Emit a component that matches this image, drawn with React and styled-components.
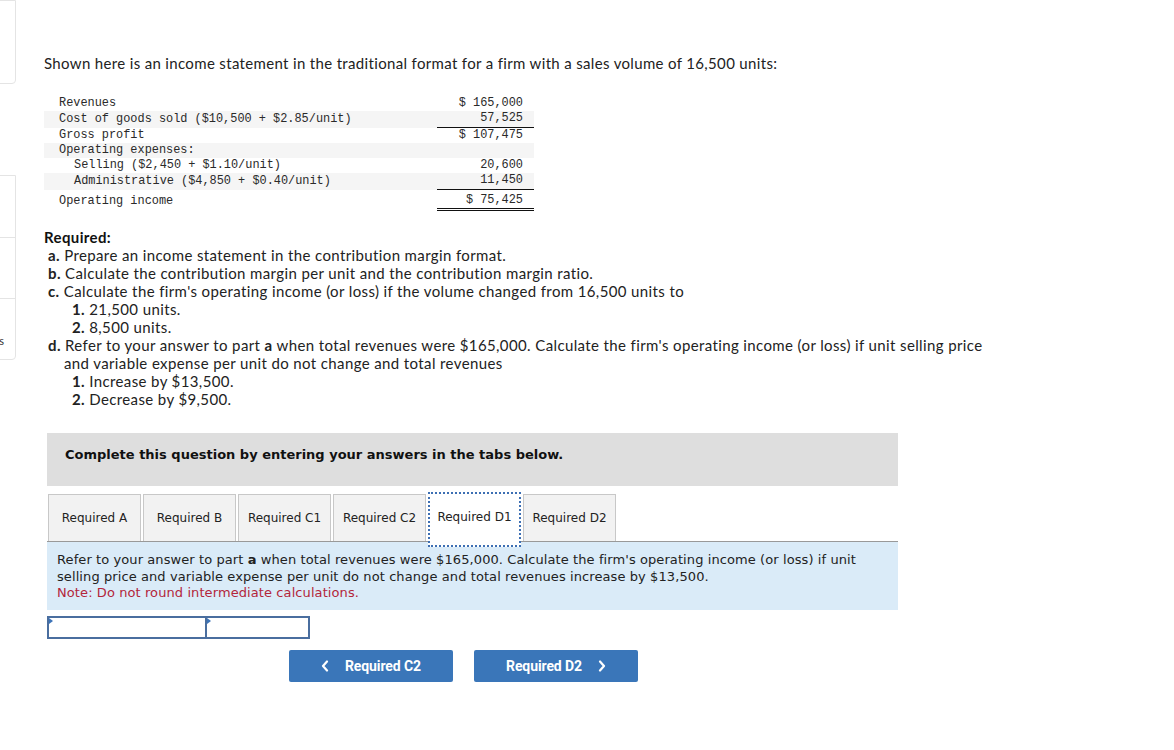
import React from 'react'
import styled, { createGlobalStyle } from 'styled-components'

const GlobalStyle = createGlobalStyle`
  html, body {
    margin: 0;
    padding: 0;
    background: #fff;
  }
  body {
    font-family: Lato, "Open Sans", sans-serif;
    color: #222;
  }
`

const Page = styled.div`
  display: flex;
  flex-direction: row;
  width: 1174px;
  min-height: 750px;
`

const Sidebar = styled.div`
  flex: 0 0 16px;
  overflow: hidden;
  display: flex;
  flex-direction: column;
`

const SideCard = styled.div`
  width: 216px;
  margin-left: -200px;
  margin-top: ${props => props.top || 0}px;
  border: 1px solid #e4e4e4;
  border-radius: 0 0 4px 0;
  box-sizing: border-box;
  display: flex;
  flex-direction: column;
  background: #fff;
`

const SideSection = styled.div`
  height: ${props => props.h}px;
  border-top: ${props => (props.first ? 'none' : '1px solid #e4e4e4')};
  display: flex;
  align-items: flex-end;
  justify-content: flex-end;
  padding: 0 11px 12px 0;
  box-sizing: border-box;
  font-size: 11px;
  color: #333;
`

const Main = styled.div`
  flex: 1 1 auto;
  padding: 53px 0 0 28px;
`

const Intro = styled.p`
  margin: 0;
  font-size: 15px;
  line-height: 20px;
  letter-spacing: 0.34px;
  color: #222;
`

const Statement = styled.table`
  margin-top: 23px;
  border-spacing: 0;
  width: 490px;
  font-family: "Liberation Mono", "DejaVu Sans Mono", monospace;
  font-size: 11.9px;
  color: #2a2a2a;

  td {
    padding: 0;
    line-height: 15.3px;
    white-space: pre;
  }
`

const Row = styled.tr`
  background: ${props => (props.striped ? '#f5f5f5' : 'transparent')};

  td {
    padding-top: ${props => props.padTop || 0}px;
  }
`

const Label = styled.td`
  padding-left: ${props => (props.indent ? 30 : 15)}px !important;
`

const Amount = styled.td`
  width: 86px;
  padding-right: 11px !important;
  text-align: right;
  border-bottom: ${props =>
    props.rule === 'double' ? '3px double #111' : props.rule ? '1px solid #111' : 'none'};
`

const Required = styled.div`
  margin-top: 17px;
  font-size: 15px;
  line-height: 18px;
  letter-spacing: 0.38px;
  color: #222;
`

const ReqTitle = styled.div`
  font-weight: 700;
  color: #111;
`

const ReqItem = styled.div`
  padding-left: 20px;
  text-indent: -16px;
  b {
    font-weight: 700;
  }
`

const SubItem = styled.div`
  padding-left: 24px;
`

const Question = styled.div`
  margin: 25px 0 0 3px;
  width: 851px;
  font-family: "DejaVu Sans", Verdana, sans-serif;
`

const Banner = styled.div`
  background: #dedede;
  height: 53px;
  box-sizing: border-box;
  padding: 14px 18px 0;
  font-size: 13px;
  line-height: 16px;
  font-weight: 700;
  color: #111;
`

const Tabs = styled.div`
  display: flex;
  gap: 2px;
  margin-top: 8px;
  padding-left: 1px;
  border-bottom: 1px solid #999;
  height: 48px;
  box-sizing: border-box;
`

const Tab = styled.div`
  display: flex;
  align-items: center;
  justify-content: center;
  width: 93px;
  box-sizing: border-box;
  font-size: 12px;
  color: #222;
  background: ${props => (props.active ? '#fff' : '#f2f2f2')};
  border: ${props => (props.active ? '2px dotted #3d6fb3' : '1px solid #c8c8c8')};
  border-bottom: ${props => (props.active ? '2px dotted #3d6fb3' : 'none')};
  margin-top: ${props => (props.active ? -2 : 0)}px;
  height: ${props => (props.active ? 55 : 47)}px;
  padding-bottom: ${props => (props.active ? 5 : 0)}px;
  position: relative;
  z-index: ${props => (props.active ? 1 : 0)};
`

const Panel = styled.div`
  background: #daebf8;
  padding: 10px 10px 8px 10px;
  font-size: 13px;
  line-height: 16.5px;
  color: #222;
  letter-spacing: 0.09px;
  b {
    font-weight: 700;
  }
`

const Note = styled.div`
  color: #b3263b;
`

const Inputs = styled.div`
  display: flex;
  margin-top: 6px;
`

const InputCell = styled.div`
  position: relative;
  width: ${props => props.w}px;
  height: 23px;
  box-sizing: border-box;
  border: 2px solid #4a6e9f;
  border-left-width: ${props => (props.first ? 2 : 0)}px;
  background: #fff;

  &::before {
    content: '';
    position: absolute;
    top: 0;
    left: 0;
    border-top: 3px solid transparent;
    border-bottom: 3px solid transparent;
    border-left: 4px solid #3d74b8;
  }
`

const Nav = styled.div`
  display: flex;
  gap: 21px;
  margin-top: 11px;
  padding-left: 242px;
`

const NavButton = styled.button`
  width: 164px;
  height: 32px;
  border: none;
  border-radius: 2px;
  background: #3a76b9;
  color: #fff;
  font-family: Roboto, "Liberation Sans", sans-serif;
  font-weight: 700;
  font-size: 14px;
  letter-spacing: -0.1px;
  display: flex;
  align-items: center;
  justify-content: center;
  gap: 16px;
  padding: 0;
  cursor: pointer;
`

const Chevron = ({ dir }) => (
  <svg width="8" height="12" viewBox="0 0 8 12">
    <path
      d={dir === 'left' ? 'M6 1.5 L2 6 L6 10.5' : 'M2 1.5 L6 6 L2 10.5'}
      fill="none"
      stroke="#fff"
      strokeWidth="2.2"
      strokeLinecap="round"
      strokeLinejoin="round"
    />
  </svg>
)

const rows = [
  { label: 'Revenues', amount: '$ 165,000' },
  { label: 'Cost of goods sold ($10,500 + $2.85/unit)', amount: '57,525', striped: true, rule: true },
  { label: 'Gross profit', amount: '$ 107,475' },
  { label: 'Operating expenses:', amount: '', striped: true },
  { label: 'Selling ($2,450 + $1.10/unit)', amount: '20,600', indent: true },
  { label: 'Administrative ($4,850 + $0.40/unit)', amount: '11,450', indent: true, striped: true, rule: true },
  { label: 'Operating income', amount: '$ 75,425', rule: 'double', padTop: 3 },
]

const tabs = ['Required A', 'Required B', 'Required C1', 'Required C2', 'Required D1', 'Required D2']

export default function App() {
  return (
    <Page>
      <GlobalStyle />
      <Sidebar>
        <SideCard>
          <SideSection h={82} first />
        </SideCard>
        <SideCard top={91}>
          <SideSection h={61} first />
          <SideSection h={61} />
          <SideSection h={61}>Resources</SideSection>
        </SideCard>
      </Sidebar>

      <Main>
        <Intro>
          Shown here is an income statement in the traditional format for a firm with a sales volume of 16,500 units:
        </Intro>

        <Statement>
          <tbody>
            {rows.map(r => (
              <Row key={r.label} striped={r.striped} padTop={r.padTop}>
                <Label indent={r.indent}>{r.label}</Label>
                <Amount rule={r.rule}>{r.amount}</Amount>
              </Row>
            ))}
          </tbody>
        </Statement>

        <Required>
          <ReqTitle>Required:</ReqTitle>
          <ReqItem>
            <b>a.</b> Prepare an income statement in the contribution margin format.
          </ReqItem>
          <ReqItem>
            <b>b.</b> Calculate the contribution margin per unit and the contribution margin ratio.
          </ReqItem>
          <ReqItem>
            <b>c.</b> Calculate the firm's operating income (or loss) if the volume changed from 16,500 units to
            <SubItem>
              <b>1.</b> 21,500 units.
            </SubItem>
            <SubItem>
              <b>2.</b> 8,500 units.
            </SubItem>
          </ReqItem>
          <ReqItem>
            <b>d.</b> Refer to your answer to part <b>a</b> when total revenues were $165,000. Calculate the firm's
            operating income (or loss) if unit selling price
            <br />
            and variable expense per unit do not change and total revenues
            <SubItem>
              <b>1.</b> Increase by $13,500.
            </SubItem>
            <SubItem>
              <b>2.</b> Decrease by $9,500.
            </SubItem>
          </ReqItem>
        </Required>

        <Question>
          <Banner>Complete this question by entering your answers in the tabs below.</Banner>

          <Tabs>
            {tabs.map(t => (
              <Tab key={t} active={t === 'Required D1'}>
                {t}
              </Tab>
            ))}
          </Tabs>

          <Panel>
            Refer to your answer to part <b>a</b> when total revenues were $165,000. Calculate the firm's operating
            income (or loss) if unit selling price and variable expense per unit do not change and total revenues
            increase by $13,500.
            <Note>Note: Do not round intermediate calculations.</Note>
          </Panel>

          <Inputs>
            <InputCell w={160} first />
            <InputCell w={103} />
          </Inputs>

          <Nav>
            <NavButton>
              <Chevron dir="left" />
              Required C2
            </NavButton>
            <NavButton>
              Required D2
              <Chevron dir="right" />
            </NavButton>
          </Nav>
        </Question>
      </Main>
    </Page>
  )
}
